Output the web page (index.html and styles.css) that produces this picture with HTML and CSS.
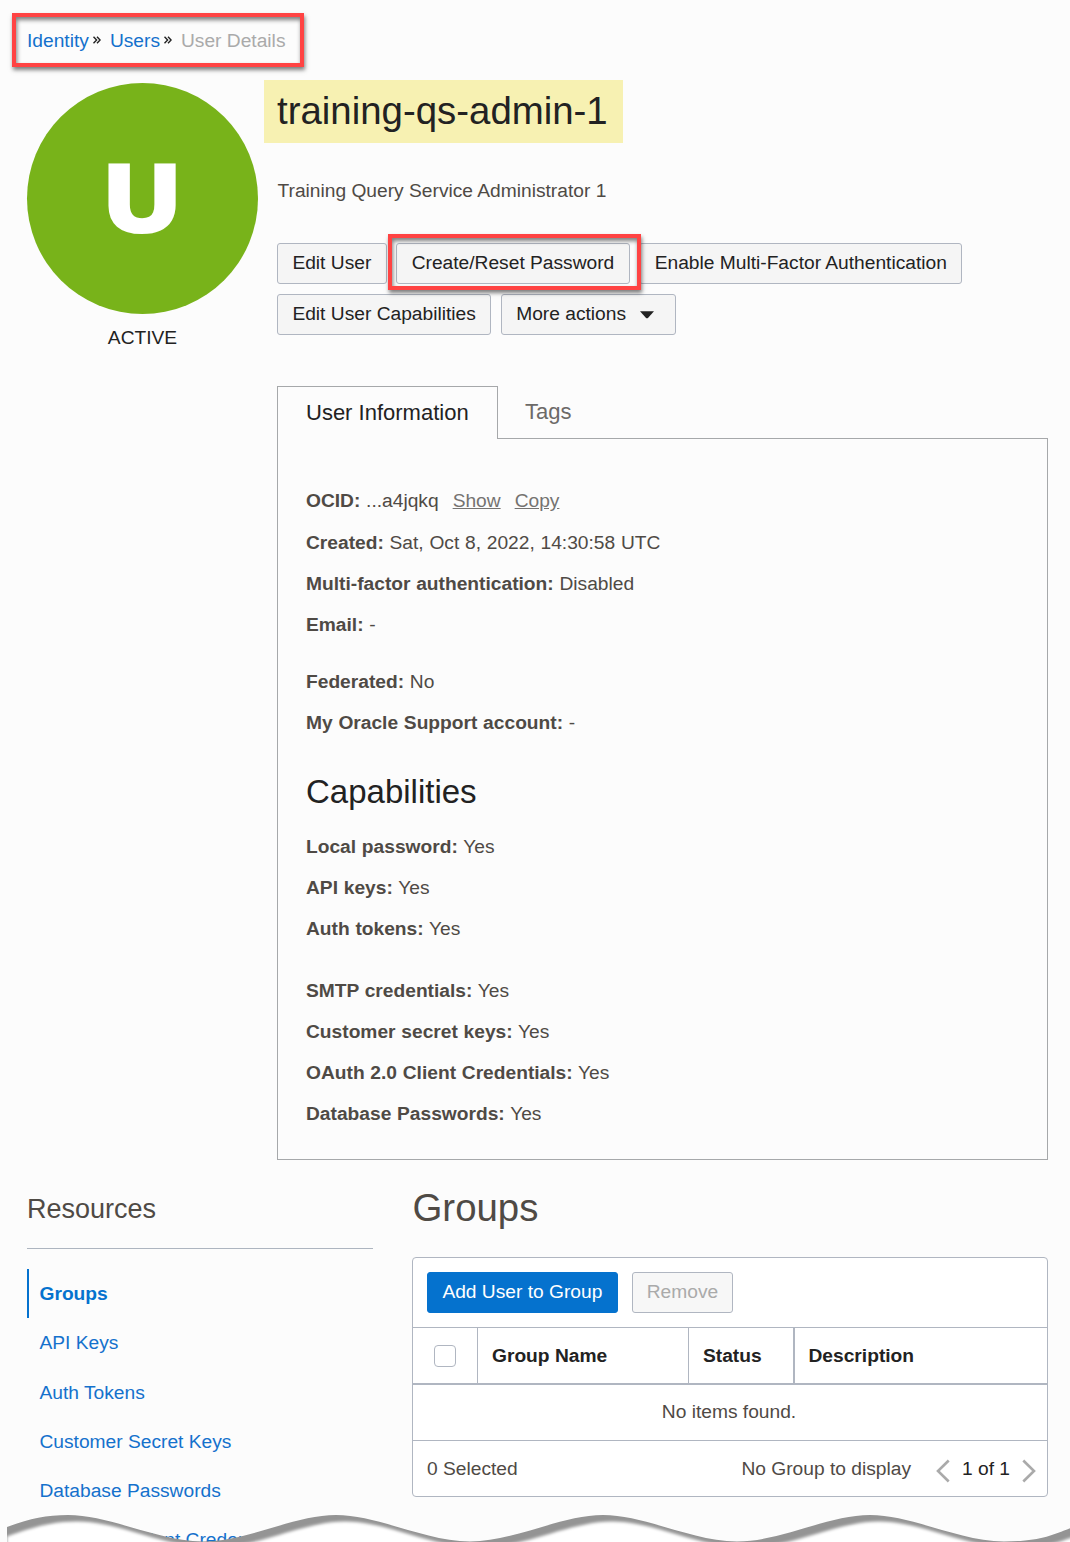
FILE: index.html
```html
<!DOCTYPE html>
<html lang="en">
<head>
<meta charset="utf-8">
<title>User Details</title>
<link rel="stylesheet" href="styles.css">
</head>
<body>
<div class="page">
  <nav class="breadcrumb">
    <a>Identity</a><svg class="sep" viewBox="0 0 8 8"><path d="M0.5 0.7L3.6 4L0.5 7.3M4 0.7L7.1 4L4 7.3"/></svg>
    <a>Users</a><svg class="sep" viewBox="0 0 8 8"><path d="M0.5 0.7L3.6 4L0.5 7.3M4 0.7L7.1 4L4 7.3"/></svg>
    <span class="current">User Details</span>
    <div class="callout callout-nav"></div>
  </nav>

  <section class="top">
    <aside class="identity">
      <div class="avatar"><span>U</span></div>
      <div class="state">ACTIVE</div>
    </aside>
    <main class="details">
      <h1>training-qs-admin-1</h1>
      <p class="description">Training Query Service Administrator 1</p>
      <div class="actions">
        <button class="btn">Edit User</button>
        <div class="marked"><button class="btn">Create/Reset Password</button><div class="callout callout-btn"></div></div>
        <button class="btn">Enable Multi-Factor Authentication</button>
        <button class="btn">Edit User Capabilities</button>
        <button class="btn more">More actions<svg class="caret" viewBox="0 0 14 8"><path d="M0 0.3H14L8.2 6.8Q7 7.8 5.8 6.8Z"/></svg></button>
      </div>
      <div class="tabs">
        <div class="tab active">User Information</div>
        <div class="tab">Tags</div>
      </div>
      <div class="panel">
        <div class="row"><b>OCID:</b> ...a4jqkq<a class="sub show">Show</a><a class="sub copy">Copy</a></div>
        <div class="row"><b>Created:</b> Sat, Oct 8, 2022, 14:30:58 UTC</div>
        <div class="row"><b>Multi-factor authentication:</b> Disabled</div>
        <div class="row"><b>Email:</b> -</div>
        <div class="row second"><b>Federated:</b> No</div>
        <div class="row"><b>My Oracle Support account:</b> -</div>
        <h2>Capabilities</h2>
        <div class="row"><b>Local password:</b> Yes</div>
        <div class="row"><b>API keys:</b> Yes</div>
        <div class="row"><b>Auth tokens:</b> Yes</div>
        <div class="row third"><b>SMTP credentials:</b> Yes</div>
        <div class="row"><b>Customer secret keys:</b> Yes</div>
        <div class="row"><b>OAuth 2.0 Client Credentials:</b> Yes</div>
        <div class="row"><b>Database Passwords:</b> Yes</div>
      </div>
    </main>
  </section>

  <section class="bottom">
    <aside class="resources">
      <h3>Resources</h3>
      <ul>
        <li class="selected">Groups</li>
        <li>API Keys</li>
        <li>Auth Tokens</li>
        <li>Customer Secret Keys</li>
        <li>Database Passwords</li>
        <li>OAuth 2.0 Client Credentials</li>
      </ul>
    </aside>
    <div class="groups">
      <h2 class="groups-title">Groups</h2>
      <div class="table">
        <div class="toolbar">
          <button class="btn primary">Add User to Group</button>
          <button class="btn disabled" disabled>Remove</button>
        </div>
        <div class="thead">
          <div class="th check"><span class="box"></span></div>
          <div class="th">Group Name</div>
          <div class="th">Status</div>
          <div class="th">Description</div>
        </div>
        <div class="empty">No items found.</div>
        <div class="tfoot">
          <span>0 Selected</span>
          <span class="count">No Group to display</span>
          <svg class="arrow" viewBox="0 0 14 24"><path d="M12.7 1.5L2 12L12.7 22.5"/></svg>
          <span class="pager">1 of 1</span>
          <svg class="arrow" viewBox="0 0 14 24"><path d="M1.3 1.5L12 12L1.3 22.5"/></svg>
        </div>
      </div>
    </div>
  </section>

  <svg class="torn" viewBox="0 0 1070 32">
    <defs>
      <filter id="soft" x="-5%" y="-50%" width="110%" height="200%"><feGaussianBlur stdDeviation="1.7"/></filter>
      <clipPath id="edge"><path d="M7 17C28 9 46 5 68 5C110 5 158 31.4 203 31.4S294 5 336 5S425 31.4 470 31.4S561 5 603 5S692 31.4 737 31.4S828 5 870 5S959 31.4 1004 31.4S1058 21 1090 11V60H7Z"/></clipPath>
    </defs>
    <g clip-path="url(#edge)">
      <rect width="1070" height="60" fill="#949494"/>
      <path transform="translate(9 6.5)" filter="url(#soft)" fill="#fff" d="M-2 20C28 9 46 5 68 5C110 5 158 31.4 203 31.4S294 5 336 5S425 31.4 470 31.4S561 5 603 5S692 31.4 737 31.4S828 5 870 5S959 31.4 1004 31.4S1058 21 1090 11V60H-2Z"/>
    </g>
  </svg>
</div>
</body>
</html>
```
FILE: styles.css
```css
* { box-sizing: border-box; }
body {
  margin: 0;
  background: #fcfcfc;
  color: #4f4a45;
  font: 19.2px/24px "Liberation Sans", Arial, sans-serif;
}
h1, h2, h3, p, ul { margin: 0; padding: 0; font-weight: 400; }
.page { position: relative; width: 1070px; height: 1542px; overflow: hidden; }

.breadcrumb {
  position: relative;
  display: flex;
  align-items: center;
  height: 83px;
  padding: 0 0 2px 27px;
}
.breadcrumb a { color: #1471cc; }
.breadcrumb .current { color: #aaa; }
.sep { width: 8px; height: 8px; margin: -1px 8.5px 0 4.5px; fill: none; stroke: #222; stroke-width: 1.4; }
.callout {
  position: absolute;
  border: 4px solid #ff4343;
  box-shadow: 1px 3px 4px rgba(0, 0, 0, .5), inset 1px 3px 4px rgba(0, 0, 0, .5);
}
.callout-nav { left: 12px; top: 13px; width: 292px; height: 54px; }
.callout-btn { left: -8px; top: -9px; width: 253px; height: 56px; }

.top { display: flex; height: 1077px; }
.identity { width: 231px; margin-left: 27px; text-align: center; color: #222; }
.avatar {
  display: flex;
  align-items: center;
  justify-content: center;
  height: 231px;
  border-radius: 50%;
  background: #78b31a;
  color: #fff;
  font: 800 98px/98px "Open Sans", sans-serif;
}
.avatar span { transform: translateY(-4px) scaleX(1.12); }
.state { margin-top: 12px; }
.details { width: 771px; margin-left: 19px; }
h1 {
  width: 359px;
  height: 63px;
  margin: -3px 0 0 -13px;
  padding-left: 13px;
  background: #f7f1b2;
  color: #222;
  font-size: 38.4px;
  line-height: 61px;
}
.description { margin-top: 36px; padding-left: 0.5px; }
.actions { display: flex; flex-wrap: wrap; gap: 10px 9.6px; margin-top: 40px; }
.marked { position: relative; z-index: 1; }
.btn {
  display: block;
  height: 41px;
  padding: 0 14.4px 2px;
  border: 1px solid #b0b6c1;
  border-radius: 3px;
  background: #f5f5f5;
  color: #222;
  font: inherit;
  white-space: nowrap;
}
.more { display: flex; align-items: center; width: 175px; }
.caret { width: 14px; height: 8px; margin: 2px 0 0 14px; fill: #222; }

.tabs { display: flex; margin-top: 51px; height: 52px; }
.tab { padding: 14px 27px 0; font-size: 22px; color: #6c6a68; }
.tab.active {
  position: relative;
  z-index: 1;
  width: 221px;
  height: 53px;
  padding: 14px 0 0 28px;
  border: 1px solid #a6a8aa;
  border-bottom: 0;
  background: #fcfcfc;
  color: #222;
}
.panel { height: 722px; padding: 41.42px 28px 0; border: 1px solid #a6a8aa; }
.row { height: 41.15px; line-height: 41.15px; white-space: pre; word-spacing: 0.4px; }
.row.second { margin-top: 16px; }
.row.third { margin-top: 21px; }
.sub { color: #757371; text-decoration: underline; }
.show { margin-left: 14px; }
.copy { margin-left: 14px; }
.panel h2 { height: 82.3px; padding-top: 29px; font-size: 33px; line-height: 40px; color: #222; }

.bottom { display: flex; gap: 39px; padding-left: 27px; }
.resources { width: 346px; }
h3 { height: 89px; padding-top: 33px; border-bottom: 1px solid #adb5c0; font-size: 27px; line-height: 32px; }
ul { list-style: none; margin-top: 20px; }
li { height: 49.3px; padding-left: 12.5px; line-height: 49px; color: #1471cc; white-space: nowrap; }
li.selected { padding-left: 10.5px; border-left: 2px solid #0572ce; color: #0572ce; font-weight: 700; }
.groups { width: 636px; }
.groups-title { height: 97px; padding: 25px 0 0 0.5px; font-size: 38.4px; line-height: 46px; }
.table { height: 240px; border: 1px solid #b0b6c1; border-radius: 4px; background: #fff; }
.toolbar { display: flex; gap: 14px; height: 69px; padding: 14px; }
.primary { background: #0572ce; border-color: #0572ce; color: #fff; }
.disabled { padding: 0 14px 2px; background: #f7f7f7; color: #aaa; }
.thead {
  display: grid;
  grid-template-columns: 64px 211px 106px 1fr;
  height: 58px;
  border: solid #b0b6c1;
  border-width: 1px 0 2px;
  color: #222;
  font-weight: 700;
}
.th { padding-left: 14px; border-left: 1px solid #b0b6c1; line-height: 55px; }
.th:last-child { border-left-width: 2px; margin-left: -1px; padding-left: 13.5px; }
.check { display: flex; align-items: center; padding-left: 21px; border: 0; }
.box { width: 22px; height: 22px; border: 1px solid #b0b6c1; border-radius: 4px; }
.empty { height: 56px; padding-right: 2px; border-bottom: 1px solid #b0b6c1; text-align: center; line-height: 53px; }
.tfoot { display: flex; align-items: center; height: 54px; padding: 1px 11px 0 14px; }
.count { margin-left: auto; margin-right: 25px; }
.pager { margin: 0 12px; color: #222; }
.arrow { width: 14px; height: 24px; margin-top: 4px; fill: none; stroke: #aaa; stroke-width: 2.6; }
.torn { position: absolute; left: 0; bottom: 0; width: 1070px; height: 32px; }
```
